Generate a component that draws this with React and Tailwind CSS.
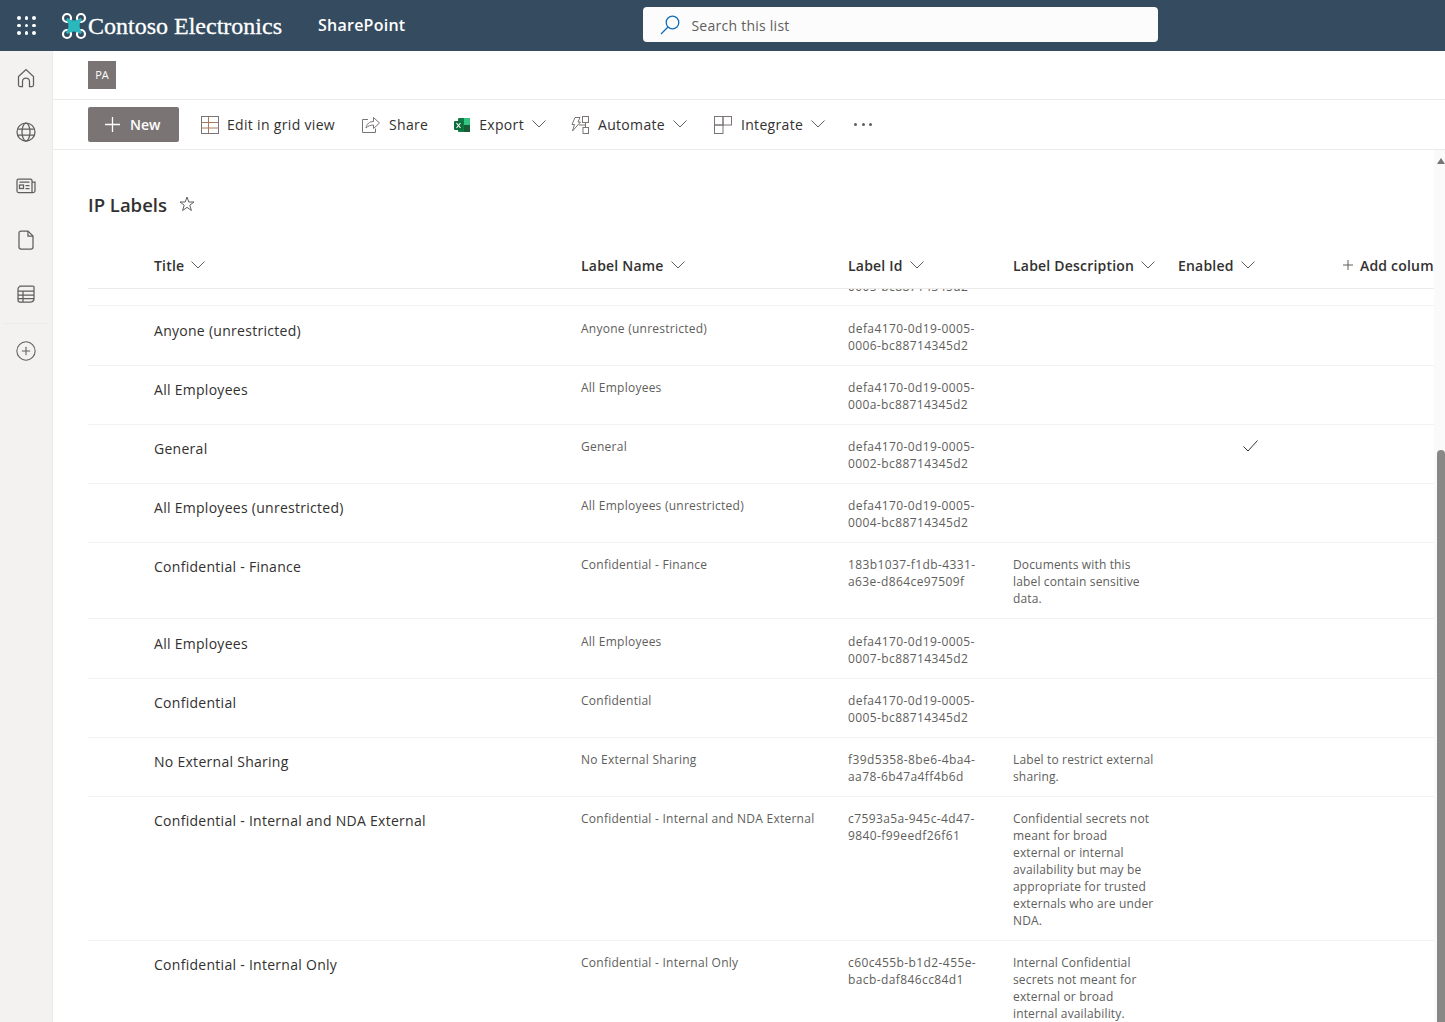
import React from 'react';
import { PlusCircle } from 'lucide-react';

const COLS = ['w-[493px]', 'w-[267px]', 'w-[165px]', 'w-[165px]', 'w-[164px]'];

const ROWS = [
  { title: 'Anyone (unrestricted)', id: 'defa4170-0d19-0005-0006-bc88714345d2', h: 'h-[60px] pt-[1px]' },
  { title: 'All Employees', id: 'defa4170-0d19-0005-000a-bc88714345d2', h: 'h-[59px]' },
  { title: 'General', id: 'defa4170-0d19-0005-0002-bc88714345d2', h: 'h-[59px]', enabled: true },
  { title: 'All Employees (unrestricted)', id: 'defa4170-0d19-0005-0004-bc88714345d2', h: 'h-[59px]' },
  { title: 'Confidential - Finance', id: '183b1037-f1db-4331-a63e-d864ce97509f', desc: 'Documents with this label contain sensitive data.', h: 'h-[76px]' },
  { title: 'All Employees', id: 'defa4170-0d19-0005-0007-bc88714345d2', h: 'h-[60px] pt-[1px]' },
  { title: 'Confidential', id: 'defa4170-0d19-0005-0005-bc88714345d2', h: 'h-[59px]' },
  { title: 'No External Sharing', id: 'f39d5358-8be6-4ba4-aa78-6b47a4ff4b6d', desc: 'Label to restrict external sharing.', h: 'h-[59px]' },
  { title: 'Confidential - Internal and NDA External', id: 'c7593a5a-945c-4d47-9840-f99eedf26f61', desc: 'Confidential secrets not meant for broad external or internal availability but may be appropriate for trusted externals who are under NDA.', h: 'h-[144px]' },
  { title: 'Confidential - Internal Only', id: 'c60c455b-b1d2-455e-bacb-daf846cc84d1', desc: 'Internal Confidential secrets not meant for external or broad internal availability.', h: 'h-[90px]' },
];

function Logo() {
  return (
    <svg width="26" height="28" viewBox="0 0 26 28" fill="none">
      <g stroke="#fff" strokeWidth="2.2">
        <circle cx="6" cy="6" r="4" />
        <circle cx="20" cy="6" r="4" />
        <circle cx="6" cy="22" r="4" />
        <circle cx="20" cy="22" r="4" />
      </g>
      <path d="M6.5 6 Q13 11 19.5 6 L21 7.5 Q16 14 21 20.5 L19.5 22 Q13 17 6.5 22 L5 20.5 Q10 14 5 7.5 Z" fill="#2bb8bd" />
    </svg>
  );
}

function Waffle() {
  return (
    <div className="grid grid-cols-3 gap-[4px]">
      {[0, 1, 2, 3, 4, 5, 6, 7, 8].map(i => <span key={i} className="w-[3.5px] h-[3.5px] rounded-full bg-white" />)}
    </div>
  );
}

// thin fabric-style caret, used in the command bar and column headers
function Caret({ className }) {
  return (
    <svg width="14" height="8" viewBox="0 0 14 8" fill="none" stroke="#605e5c" strokeWidth="1" className={className}>
      <path d="M0.5 0.5 L7 7 L13.5 0.5" />
    </svg>
  );
}

function SearchIcon() {
  return (
    <svg width="20" height="20" viewBox="0 0 20 20" fill="none" stroke="#0f6cbd" strokeWidth="1.3" className="ml-[17px]">
      <circle cx="12.5" cy="7.5" r="6.3" />
      <path d="M8 12 L1 19" />
    </svg>
  );
}

function HomeIcon() {
  return (
    <svg width="20" height="20" viewBox="0 0 20 20" fill="none" stroke="#605e5c" strokeWidth="1.25">
      <path d="M2.5 8.5 L10 1.5 L17.5 8.5 V17 Q17.5 18.5 16 18.5 H13.5 V13.5 A3.5 3.5 0 0 0 6.5 13.5 V18.5 H4 Q2.5 18.5 2.5 17 Z" />
    </svg>
  );
}

function GlobeIcon() {
  return (
    <svg width="20" height="20" viewBox="0 0 20 20" fill="none" stroke="#605e5c" strokeWidth="1.25">
      <circle cx="10" cy="10" r="9" />
      <ellipse cx="10" cy="10" rx="4" ry="9" />
      <path d="M1.8 7 H18.2 M1.8 13 H18.2" />
    </svg>
  );
}

function NewsIcon() {
  return (
    <svg width="20" height="18" viewBox="0 0 20 18" fill="none" stroke="#605e5c" strokeWidth="1.25">
      <path d="M16 15.5 V3.5 Q16 2 14.5 2 H2.5 Q1 2 1 3.5 V14 Q1 15.5 2.5 15.5 H17 Q19 15.5 19 14 V5 H16" />
      <rect x="3.5" y="8" width="4" height="3.5" />
      <path d="M3.5 5 H13.5 M9.5 8.5 H13.5 M9.5 11.5 H13.5" />
    </svg>
  );
}

function FileIcon() {
  return (
    <svg width="16" height="20" viewBox="0 0 16 20" fill="none" stroke="#605e5c" strokeWidth="1.25">
      <path d="M3 1 H10 L15 6 V17 Q15 19 13 19 H3 Q1 19 1 17 V3 Q1 1 3 1 Z" />
      <path d="M10 1 V6 H15" />
    </svg>
  );
}

function ListIcon() {
  return (
    <svg width="20" height="20" viewBox="0 0 20 20" fill="none" stroke="#605e5c" strokeWidth="1.25">
      <path d="M4 2.5 Q2 3 2 5 V16 Q2 18 4 18 H15 Q18 17.5 18 15 V2.5 Q18 2 16 2 H4 Z" />
      <path d="M2 7 H18 M2 11 H18 M2 14.5 H18 M7 7 V18" />
    </svg>
  );
}

function ExcelIcon() {
  return (
    <svg width="16" height="16" viewBox="0 0 16 16">
      <rect x="4" y="1" width="12" height="14" rx="1" fill="#107c41" />
      <rect x="10" y="1" width="6" height="7" fill="#33c481" />
      <rect x="10" y="8" width="6" height="7" fill="#185c37" />
      <rect x="0" y="4" width="9" height="9" rx="1" fill="#0e6b3a" />
      <path d="M2.5 6 L6.5 11 M6.5 6 L2.5 11" stroke="#fff" strokeWidth="1.1" />
    </svg>
  );
}

function AutomateIcon() {
  return (
    <svg width="18" height="18" viewBox="0 0 18 18" fill="none" stroke="#7a7574" strokeWidth="1">
      <path d="M4 1.5h5L7 6h2.5L1.5 15l2-6.5H1z" />
      <rect x="11.5" y="0.5" width="6" height="6" />
      <rect x="12" y="11.5" width="5.5" height="6" />
      <path d="M14.5 6.5v5M8 9h6.5" />
    </svg>
  );
}

function IntegrateIcon() {
  return (
    <svg width="18" height="18" viewBox="0 0 18 18" fill="none" stroke="#7a7574" strokeWidth="1">
      <rect x="0.5" y="0.5" width="8.5" height="8.5" />
      <rect x="9" y="0.5" width="8.5" height="8.5" />
      <rect x="0.5" y="9" width="8.5" height="8.5" />
    </svg>
  );
}

function GridIcon() {
  return (
    <svg width="18" height="18" viewBox="0 0 18 18" fill="none" strokeWidth="1" className="-mr-[1px]">
      <path d="M7.5 1v16M1 6.5h16M1 12h16" stroke="#a8795f" />
      <rect x="0.5" y="0.5" width="17" height="17" stroke="#7a7574" />
    </svg>
  );
}

function ShareIcon() {
  return (
    <svg width="18" height="17" viewBox="0 0 18 17" fill="none" stroke="#7a7574" strokeWidth="1">
      <path d="M6 3.5H0.5v13h13v-4" />
      <path d="M4 12C4.5 8 7.5 5.5 11.5 5.5V1.5l6 5.5-6 5.5V9C8.5 9 6 10 4 12z" />
    </svg>
  );
}

function CmdButton({ icon, label, caret, className }) {
  return (
    <div className={`flex items-center text-[14px] tracking-[0.32px] text-[#323130] ${className}`}>
      {icon}
      <span className="ml-[9px]">{label}</span>
      {caret && <Caret className="ml-[8px] -mt-[1px]" />}
    </div>
  );
}

function HeaderCell({ label, className }) {
  return (
    <div className={`flex items-center shrink-0 text-[14px] tracking-[0.2px] font-semibold text-[#323130] ${className}`}>
      <span>{label}</span>
      <Caret className="ml-[7px] -mt-[1px]" />
    </div>
  );
}

function Row({ row }) {
  return (
    <div className={`flex shrink-0 border-b border-[#f3f2f1] ${row.h}`}>
      <div className={`${COLS[0]} shrink-0 pl-[66px] pt-[14px] text-[14px] tracking-[0.28px] leading-[20px] text-[#323130]`}>{row.title}</div>
      <div className={`${COLS[1]} shrink-0 pr-[12px] pt-[13px] text-[12px] tracking-[0.25px] leading-[17px] text-[#605e5c]`}>{row.title}</div>
      <div className={`${COLS[2]} shrink-0 pr-[20px] pt-[13px] text-[12px] tracking-[0.4px] leading-[17px] text-[#605e5c] break-words`}>{row.id}</div>
      <div className={`${COLS[3]} shrink-0 pr-[22px] pt-[13px] text-[12px] tracking-[0.15px] leading-[17px] text-[#605e5c]`}>{row.desc}</div>
      <div className={`${COLS[4]} shrink-0 pl-[65px] pt-[15px]`}>
        {row.enabled && (
          <svg width="15" height="12" viewBox="0 0 15 12" fill="none" stroke="#323130" strokeWidth="1">
            <path d="M0.5 6.5 L5 11 L14.5 0.5" />
          </svg>
        )}
      </div>
    </div>
  );
}

export default function App() {
  return (
    <div className="h-[1022px] w-[1445px] overflow-hidden flex flex-col bg-white font-['Open_Sans','Noto_Sans',sans-serif]">
      <div className="h-[51px] shrink-0 flex items-center bg-[#344b60]">
        <div className="w-[53px] flex justify-center"><Waffle /></div>
        <div className="ml-[8px]"><Logo /></div>
        <span className="ml-[1px] w-[230px] font-['Liberation_Serif',serif] text-[24px] text-white [-webkit-text-stroke:0.3px_white]">Contoso Electronics</span>
        <span className="-mt-[2px] text-[16px] font-semibold tracking-[0.25px] text-white">SharePoint</span>
        <div className="ml-[238px] -mt-[2px] w-[515px] h-[35px] flex items-center rounded-[4px] bg-[#fcfcfc]">
          <SearchIcon />
          <span className="ml-[11px] pt-[2px] text-[14px] tracking-[0.25px] text-[#605e5c]">Search this list</span>
        </div>
      </div>
      <div className="flex-1 flex min-h-0">
        <div className="w-[53px] shrink-0 flex flex-col items-center bg-[#f3f2f1] border-r border-[#edebe9] pt-[17px] text-[#605e5c]">
          <div className="h-[20px] flex items-center"><HomeIcon /></div>
          <div className="h-[20px] mt-[34px] flex items-center"><GlobeIcon /></div>
          <div className="h-[20px] mt-[34px] flex items-center"><NewsIcon /></div>
          <div className="h-[20px] mt-[34px] flex items-center"><FileIcon /></div>
          <div className="h-[20px] mt-[34px] flex items-center"><ListIcon /></div>
          <div className="w-[44px] mt-[19px] border-t border-[#edebe9]" />
          <PlusCircle size={22} strokeWidth={1.15} className="mt-[16px]" />
        </div>
        <div className="flex-1 min-w-0 flex flex-col">
          <div className="h-[49px] shrink-0 pl-[35px] pt-[10px] border-b border-[#edebe9]">
            <div className="w-[28px] h-[28px] flex items-center justify-center bg-[#7a7574] text-[11px] text-white">PA</div>
          </div>
          <div className="h-[50px] shrink-0 flex items-center pl-[35px] border-b border-[#edebe9]">
            <div className="w-[91px] h-[35px] flex items-center rounded-[2px] bg-[#7a7574] text-white">
              <svg width="15" height="15" viewBox="0 0 15 15" stroke="#fff" strokeWidth="1.3" className="ml-[17px]">
                <path d="M7.5 0V15M0 7.5H15" />
              </svg>
              <span className="ml-[10px] text-[14px] font-semibold">New</span>
            </div>
            <CmdButton icon={<GridIcon />} label="Edit in grid view" className="ml-[22px]" />
            <CmdButton icon={<ShareIcon />} label="Share" className="ml-[27px]" />
            <CmdButton icon={<ExcelIcon />} label="Export" caret className="ml-[26px]" />
            <CmdButton icon={<AutomateIcon />} label="Automate" caret className="ml-[25px]" />
            <CmdButton icon={<IntegrateIcon />} label="Integrate" caret className="ml-[27px]" />
            <div className="ml-[29px] flex gap-[4.5px]">
              <span className="w-[3px] h-[3px] rounded-full bg-[#605e5c]" />
              <span className="w-[3px] h-[3px] rounded-full bg-[#605e5c]" />
              <span className="w-[3px] h-[3px] rounded-full bg-[#605e5c]" />
            </div>
          </div>
          <div className="flex-1 min-h-0 flex">
            <div className="w-[1381px] shrink-0 pl-[35px] flex flex-col overflow-hidden">
              <div className="h-[86px] shrink-0 pt-[41px] flex items-start">
                <h1 className="text-[18.5px] leading-[28px] font-semibold text-[#323130]">IP Labels</h1>
                <svg width="16" height="16" viewBox="0 0 16 16" fill="none" stroke="#605e5c" strokeWidth="1" className="ml-[12px] mt-[5px]">
                  <path d="M8 1 L9.8 6 H15 L10.8 9.2 L12.4 14.5 L8 11.3 L3.6 14.5 L5.2 9.2 L1 6 H6.2 Z" />
                </svg>
              </div>
              <div className="h-[53px] shrink-0 flex items-center pt-[6px] border-b border-[#edebe9] overflow-hidden">
                <HeaderCell label="Title" className={`${COLS[0]} pl-[66px]`} />
                <HeaderCell label="Label Name" className={COLS[1]} />
                <HeaderCell label="Label Id" className={COLS[2]} />
                <HeaderCell label="Label Description" className={COLS[3]} />
                <HeaderCell label="Enabled" className={COLS[4]} />
                <div className="flex items-center shrink-0 text-[14px] tracking-[0.2px] font-semibold text-[#323130] whitespace-nowrap">
                  <svg width="10" height="10" viewBox="0 0 10 10" stroke="#605e5c" strokeWidth="1" className="ml-[1px] mr-[7px]">
                    <path d="M5 0V10M0 5H10" />
                  </svg>
                  <span>Add column</span>
                </div>
              </div>
              <div className="h-[17px] shrink-0 border-b border-[#f3f2f1] overflow-hidden flex">
                <div className="ml-[760px] -mt-[11px] text-[12px] tracking-[0.4px] leading-[17px] text-[#605e5c]">0005-bc88714345d2</div>
              </div>
              {ROWS.map(row => <Row key={row.id} row={row} />)}
            </div>
            <div className="flex-1 relative bg-[#fafafa]">
              <div className="absolute left-[3px] top-[8px] w-0 h-0 border-x-[4px] border-x-transparent border-b-[6px] border-b-[#7a7574]" />
              <div className="absolute left-[3px] top-[300px] bottom-0 w-[8px] rounded-t-[4px] bg-[#8a8886]" />
            </div>
          </div>
        </div>
      </div>
    </div>
  );
}
